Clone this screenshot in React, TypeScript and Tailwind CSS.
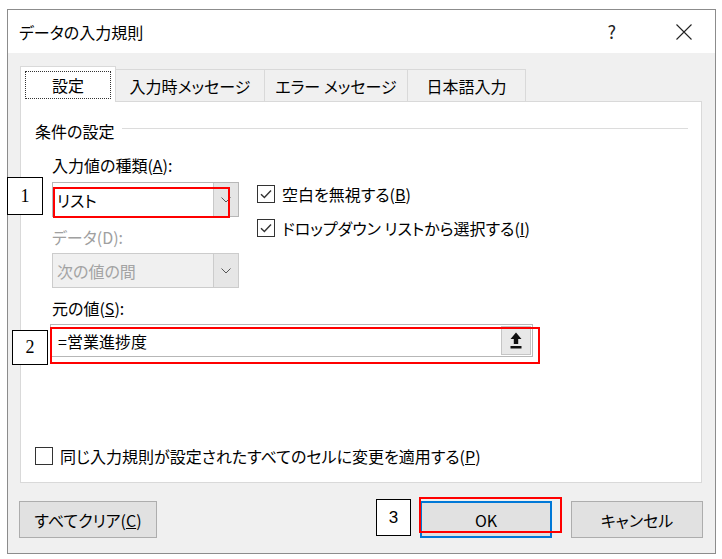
import React from "react";

const jp = "font-['Noto_Sans_CJK_JP',sans-serif] [font-feature-settings:'palt']";

function Check({ checked = false }: { checked?: boolean }) {
  return (
    <svg width="18" height="18" viewBox="0 0 18 18" className="shrink-0">
      <rect x="0.5" y="0.5" width="17" height="17" fill="#fff" stroke="#333" />
      {checked && <path d="M4 9.2 L7.4 12.6 L14 5.6" fill="none" stroke="#333" strokeWidth="1.4" />}
    </svg>
  );
}

function Chevron({ color = "#444" }: { color?: string }) {
  return (
    <svg width="10" height="6" viewBox="0 0 10 6">
      <path d="M0.5 0.5 L5 5 L9.5 0.5" fill="none" stroke={color} strokeWidth="1" />
    </svg>
  );
}

function Combo({ text, disabled = false }: { text: string; disabled?: boolean }) {
  return (
    <div
      className={
        "flex h-[35px] w-[187px] border " +
        (disabled ? "border-[#cccccc] bg-[#f0f0f0]" : "border-[#b7b7b7] bg-white")
      }
    >
      <div
        className={
          "flex flex-1 items-center pl-[4px] text-[16px] " +
          (disabled ? "text-[#a3a3a3]" : "text-black")
        }
      >
        {text}
      </div>
      <div
        className={
          "flex w-[25px] items-center justify-center border-l " +
          (disabled ? "border-[#cccccc] bg-[#e6e6e6]" : "border-[#c8c8c8] bg-[#e5e5e5]")
        }
      >
        <Chevron color="#555" />
      </div>
    </div>
  );
}

function Label({ children, className = "" }: { children: React.ReactNode; className?: string }) {
  return <div className={"h-[24px] text-[16px] leading-[24px] " + className}>{children}</div>;
}

function Btn({ children, className = "" }: { children: React.ReactNode; className?: string }) {
  return (
    <div
      className={
        "flex h-[37px] items-center justify-center bg-[#e1e1e1] text-[16px] " + className
      }
    >
      {children}
    </div>
  );
}

export default function App() {
  return (
    <div className={"relative h-[559px] w-[722px] overflow-hidden bg-white pl-[7px] pt-[9px] text-black " + jp}>
      <div className="flex h-[545px] w-[709px] flex-col border border-[#8c8c8c] bg-[#f0f0f0]">
        {/* title bar */}
        <div className="flex h-[43px] items-center bg-white pl-[11px]">
          <span className="text-[16px]">データの入力規則</span>
          <span className="ml-auto mr-[60px] text-[18px] text-[#222]">?</span>
          <svg width="16" height="16" viewBox="0 0 16 16" className="mr-[23px]">
            <path d="M0.5 0.5 L15.5 15.5 M15.5 0.5 L0.5 15.5" stroke="#222" strokeWidth="1.1" />
          </svg>
        </div>

        {/* tabs */}
        <div className="mt-[13px] flex h-[35px] items-end pl-[12px]">
          <div className="relative z-10 -mb-px flex h-[36px] w-[96px] items-start border border-b-0 border-[#d9d9d9] bg-white p-[4px] pb-[3px]">
            <div className="flex h-[28px] w-full items-center justify-center border border-dotted border-[#333] text-[16px]">
              設定
            </div>
          </div>
          <div className="flex h-[32px] w-[149px] items-center justify-center border border-b-0 border-l-0 border-[#d9d9d9] text-[16px]">
            入力時メッセージ
          </div>
          <div className="flex h-[32px] w-[143px] items-center justify-center border border-b-0 border-l-0 border-[#d9d9d9] text-[16px]">
            エラー メッセージ
          </div>
          <div className="flex h-[32px] w-[118px] items-center justify-center border border-b-0 border-l-0 border-[#d9d9d9] text-[16px]">
            日本語入力
          </div>
        </div>

        {/* panel */}
        <div className="ml-[12px] flex h-[382px] w-[682px] flex-col border border-[#d9d9d9] bg-white">
          <div className="mt-[17px] flex h-[24px] items-start pl-[14px] pr-[13px]">
            <span className="text-[16px] leading-[24px]">条件の設定</span>
            <div className="ml-[8px] mt-[9px] h-px flex-1 bg-[#dcdcdc]" />
          </div>

          <div className="mt-[10px] flex pl-[31px]">
            <div className="flex flex-col">
              <Label>
                入力値の種類(<span className="underline">A</span>):
              </Label>
              <div className="mt-[5px]">
                <Combo text="リスト" />
              </div>
              <Label className="mt-[8px] text-[#a0a0a0]">データ(D):</Label>
              <div className="mt-[4px]">
                <Combo text="次の値の間" disabled />
              </div>
            </div>
            <div className="ml-[18px] flex flex-col gap-[10px] pt-[29px]">
              <div className="flex h-[24px] items-center gap-[7px] text-[16px]">
                <Check checked />
                <span>
                  空白を無視する(<span className="underline">B</span>)
                </span>
              </div>
              <div className="flex h-[24px] items-center gap-[7px] text-[16px]">
                <Check checked />
                <span>
                  ドロップダウン リストから選択する(<span className="underline">I</span>)
                </span>
              </div>
            </div>
          </div>

          <Label className="ml-[31px] mt-[8px]">
            元の値(<span className="underline">S</span>):
          </Label>
          <div className="ml-[29px] mt-[4px] flex h-[33px] w-[483px] border border-[#b7b7b7] bg-white">
            <div className="flex flex-1 items-center pl-[7px] text-[16px]">=営業進捗度</div>
            <div className="m-px flex w-[30px] items-center justify-center border border-[#c5c5c5] bg-[#e8e8e8]">
              <svg width="12" height="17" viewBox="0 0 12 17">
                <path d="M6 0.5 L11.5 7 L8.2 7 L8.2 12 L3.8 12 L3.8 7 L0.5 7 Z" fill="#111" />
                <rect x="0.5" y="14" width="11" height="2.5" fill="#111" />
              </svg>
            </div>
          </div>

          <div className="ml-[14px] mt-[87px] flex h-[24px] items-center gap-[7px] text-[16px]">
            <Check />
            <span>
              同じ入力規則が設定されたすべてのセルに変更を適用する(<span className="underline">P</span>)
            </span>
          </div>
        </div>

        {/* buttons */}
        <div className="mt-[18px] flex pl-[11px] pr-[12px]">
          <Btn className="w-[138px] border border-[#adadad]">
            すべてクリア(<span className="underline">C</span>)
          </Btn>
          <Btn className="ml-auto w-[132px] border-2 border-[#0078d7]">OK</Btn>
          <Btn className="ml-[19px] w-[132px] border border-[#adadad]">キャンセル</Btn>
        </div>
      </div>

      {/* annotations */}
      <div className="absolute left-[7px] top-[177px] flex h-[38px] w-[36px] items-center justify-center border border-black bg-white font-['Liberation_Serif',serif] text-[18px]">
        1
      </div>
      <div className="absolute left-[53px] top-[187px] h-[31px] w-[177px] border-2 border-[#ff0000]" />
      <div className="absolute left-[12px] top-[330px] flex h-[35px] w-[36px] items-center justify-center border border-black bg-white font-['Liberation_Serif',serif] text-[18px]">
        2
      </div>
      <div className="absolute left-[50px] top-[327px] h-[37px] w-[490px] border-2 border-[#ff0000]" />
      <div className="absolute left-[376px] top-[499px] flex h-[37px] w-[35px] items-center justify-center border border-black bg-white font-['Liberation_Sans',sans-serif] text-[17px]">
        3
      </div>
      <div className="absolute left-[419px] top-[497px] h-[36px] w-[143px] border-2 border-[#ff0000]" />
    </div>
  );
}
